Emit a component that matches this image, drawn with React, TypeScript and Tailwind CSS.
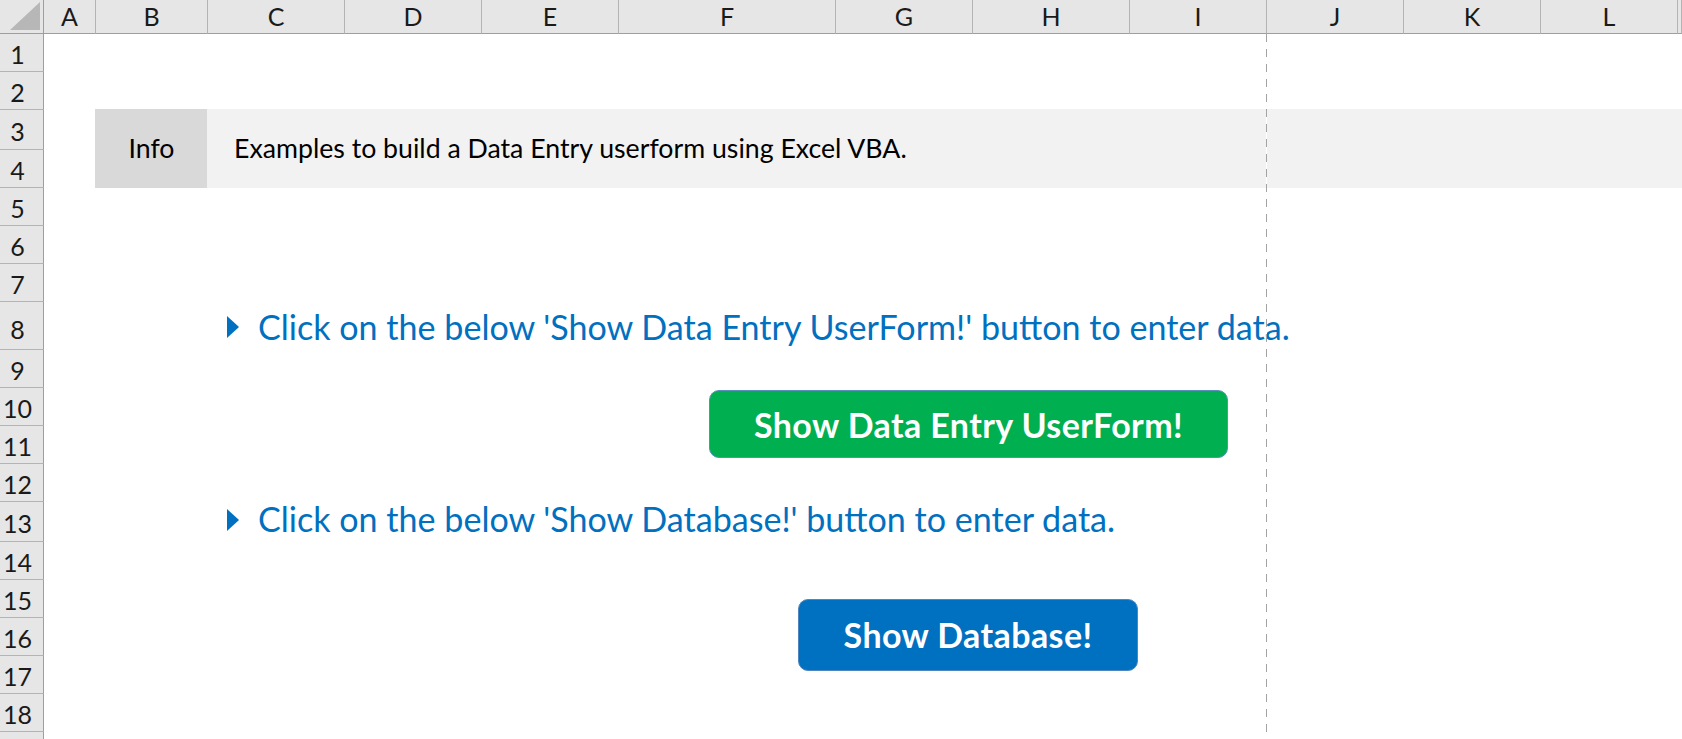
import React from "react";

const cols = ["A", "B", "C", "D", "E", "F", "G", "H", "I", "J", "K", "L", ""];
const rowHeights = [38, 38, 40, 38, 38, 38, 38, 48, 38, 38, 38, 38, 40, 38, 38, 38, 38, 38, 38];

function Bullet() {
  return (
    <svg width="12" height="22" viewBox="0 0 12 22" className="shrink-0">
      <polygon points="0,0 12,11 0,22" fill="#0070c0" />
    </svg>
  );
}

export default function App() {
  return (
    <div className="relative w-[1682px] h-[739px] overflow-hidden bg-white [font-family:Lato,'Open_Sans',sans-serif]">
      <div className="grid grid-cols-[44px_52px_112px_137px_137px_137px_217px_137px_157px_137px_137px_137px_137px_1fr] grid-rows-[34px_38px_38px_40px_38px_38px_38px_38px_48px_38px_38px_38px_38px_40px_38px_38px_38px_38px_38px_38px]">
        {/* corner */}
        <div className="col-start-1 row-start-1 bg-[#e6e6e6] border-r border-b border-[#9e9e9e] relative">
          <svg width="44" height="34" className="absolute left-0 top-0">
            <polygon points="10,30 40,2 40,30" fill="#b7b7b7" />
          </svg>
        </div>
        {/* column headers */}
        {cols.map((c, i) => (
          <div
            key={i}
            style={{ gridColumnStart: i + 2 }}
            className="row-start-1 bg-[#e6e6e6] border-b border-b-[#9e9e9e] border-r border-r-[#b4b4b4] flex items-center justify-center text-[25px] leading-none text-[#1a1a1a]"
          >
            {c}
          </div>
        ))}
        {/* row headers */}
        {rowHeights.map((h, i) => (
          <div
            key={i}
            style={{ gridRowStart: i + 2 }}
            className={
              "col-start-1 bg-[#e6e6e6] border-r border-r-[#9e9e9e] border-b border-b-[#b4b4b4] flex justify-center items-center pr-[8px] text-[25px] leading-none text-[#1a1a1a] " +
              (i === 7 ? "pt-[8px]" : "pt-[3px]")
            }
          >
            {i < 18 ? i + 1 : ""}
          </div>
        ))}

        {/* Info band */}
        <div className="col-start-3 row-start-4 row-end-6 -ml-px -mt-px bg-[#d9d9d9] flex items-center justify-center text-[26.7px] leading-none text-black">
          Info
        </div>
        <div className="col-start-4 col-end-15 row-start-4 row-end-6 -ml-px -mt-px bg-[#f2f2f2] flex items-center pl-[27px] text-[26.7px] leading-none text-black whitespace-nowrap">
          Examples to build a Data Entry userform using Excel VBA.
        </div>

        {/* Row 8 text */}
        <div className="col-start-4 col-end-15 row-start-9 flex items-center pl-[19px] pt-[2px] text-[34.1px] leading-none text-[#0070c0] whitespace-nowrap">
          <Bullet />
          <span className="ml-[19px]">Click on the below 'Show Data Entry UserForm!' button to enter data.</span>
        </div>

        {/* Green button */}
        <div className="col-start-7 col-end-11 row-start-11 row-end-13 self-start justify-self-start ml-[90px] mt-[2px] w-[519px] h-[68px] rounded-[10px] bg-[#00b050] border border-[#5a8fb8] flex items-center justify-center pt-[2px] text-white font-bold text-[34px] tracking-[0.4px] leading-none whitespace-nowrap">
          Show Data Entry UserForm!
        </div>

        {/* Row 13 text */}
        <div className="col-start-4 col-end-15 row-start-14 flex items-center pl-[19px] pb-[5px] text-[34.1px] leading-none text-[#0070c0] whitespace-nowrap">
          <Bullet />
          <span className="ml-[19px]">Click on the below 'Show Database!' button to enter data.</span>
        </div>

        {/* Blue button */}
        <div className="col-start-7 col-end-11 row-start-16 row-end-19 self-start justify-self-start ml-[179px] mt-[19px] w-[340px] h-[72px] rounded-[10px] bg-[#0070c0] border border-[#4f86c0] flex items-center justify-center text-white font-bold text-[34px] tracking-[0.4px] leading-none whitespace-nowrap">
          Show Database!
        </div>

        {/* Page break dashed line */}
        <div className="col-start-10 row-start-2 row-end-21 justify-self-end w-px z-10 bg-[repeating-linear-gradient(to_bottom,#a3a3a3_0px,#a3a3a3_8px,#ffffff_8px,#ffffff_15px)]" />
      </div>
    </div>
  );
}
